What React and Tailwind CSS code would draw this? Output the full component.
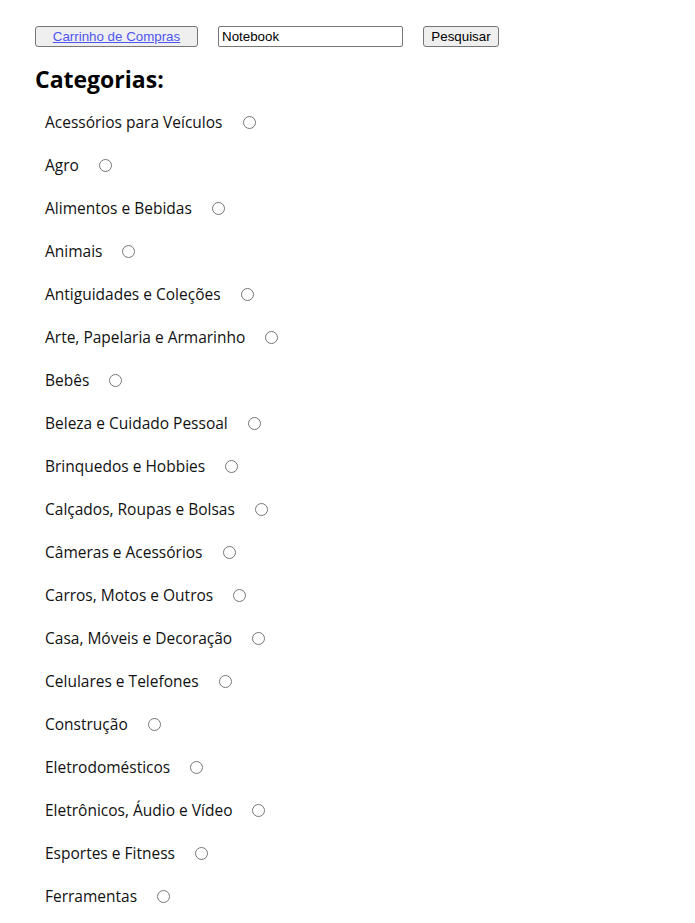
const categorias = [
  'Acessórios para Veículos',
  'Agro',
  'Alimentos e Bebidas',
  'Animais',
  'Antiguidades e Coleções',
  'Arte, Papelaria e Armarinho',
  'Bebês',
  'Beleza e Cuidado Pessoal',
  'Brinquedos e Hobbies',
  'Calçados, Roupas e Bolsas',
  'Câmeras e Acessórios',
  'Carros, Motos e Outros',
  'Casa, Móveis e Decoração',
  'Celulares e Telefones',
  'Construção',
  'Eletrodomésticos',
  'Eletrônicos, Áudio e Vídeo',
  'Esportes e Fitness',
  'Ferramentas',
];

export default function App() {
  return (
    <div className="min-h-screen bg-white pt-[26px] pl-[35px] text-black">
      <div className="flex items-center h-[21px] font-['Liberation_Sans',Arial,sans-serif] text-[13.33px]">
        <button className="w-[163px] h-[21px] bg-[#efefef] border border-[#767676] rounded-[3px] flex items-center justify-center">
          <a href="#" className="text-[#4f56f2] underline">Carrinho de Compras</a>
        </button>
        <input
          type="text"
          defaultValue="Notebook"
          className="ml-[20px] w-[185px] h-[21px] border border-[#767676] rounded-[2px] px-[3px] outline-none"
        />
        <button className="ml-[20px] w-[76px] h-[21px] bg-[#efefef] border border-[#767676] rounded-[3px]">
          Pesquisar
        </button>
      </div>

      <h1 className="mt-[18px] h-[28px] leading-[28px] text-[23px] font-bold font-['Open_Sans',sans-serif]">
        Categorias:
      </h1>

      <ul className="mt-[8px] pl-[10px] font-['Open_Sans',sans-serif] text-[15.5px] text-[#111]">
        {categorias.map((c) => (
          <li key={c} className="flex items-center h-[43px]">
            <span>{c}</span>
            <input type="radio" name="categoria" className="ml-[20px] w-[13px] h-[13px]" />
          </li>
        ))}
      </ul>
    </div>
  );
}
